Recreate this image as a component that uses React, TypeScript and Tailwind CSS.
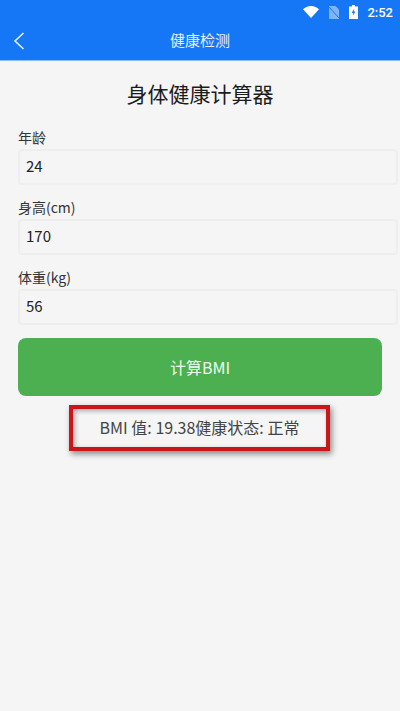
import React from "react";

const fields = [
  { label: "年龄", value: "24" },
  { label: "身高(cm)", value: "170" },
  { label: "体重(kg)", value: "56" },
];

const font = "font-['Noto_Sans_CJK_SC','Noto_Sans',sans-serif]";

const StatusBar = () => (
  <div className="flex h-[24px] items-center justify-end gap-[9px] pr-[7px] text-white">
    <svg width="16" height="12" viewBox="0 0 16 12">
      <path d="M0 3.2C2 1.3 4.8 0 8 0s6 1.3 8 3.2L8 12z" fill="#fff" />
    </svg>
    <svg width="10" height="13" viewBox="0 0 10 13" className="mx-[1px]">
      <path d="M0 0h6.5L10 3.5V13H0z" fill="#fff" fillOpacity="0.45" />
      <path d="M0 1l10 11" stroke="#1677ff" strokeWidth="1" />
    </svg>
    <svg width="9" height="14" viewBox="0 0 9 14">
      <path d="M3 0h3v1.5h3V14H0V1.5h3z" fill="#fff" />
      <path d="M5.2 3.6L2.6 8h1.7l-.5 3 2.6-4.4H4.7z" fill="#1677ff" />
    </svg>
    <span className="text-[13px] leading-none font-['Roboto',sans-serif] font-medium">2:52</span>
  </div>
);

const App = () => {
  return (
    <div className={`flex h-[711px] w-[400px] flex-col overflow-hidden bg-[#f5f5f5] ${font}`}>
      <header className="h-[61px] shrink-0 border-b border-[#8fbdfb] bg-[#1677f6]">
        <StatusBar />
        <div className="relative flex h-[33px] items-center justify-center">
          <svg width="12" height="18" viewBox="0 0 12 18" className="absolute left-[13px] top-[8px]">
            <path d="M10.5 1L2 9l8.5 8" fill="none" stroke="#e6f0ff" strokeWidth="1.6" />
          </svg>
          <span className="text-[15px] text-[#e6f0ff]">健康检测</span>
        </div>
      </header>

      <main className="flex flex-col px-[18px]">
        <h1 className="mt-[14px] h-[36px] text-center text-[21px] leading-[36px] font-normal text-[#1c1c1c]">
          身体健康计算器
        </h1>

        <div className="mt-[16px] flex flex-col gap-[12px]">
          {fields.map((field) => (
            <div key={field.label} className="flex flex-col">
              <label className="h-[22px] text-[14px] leading-[20px] text-[#333]">{field.label}</label>
              <div className="flex h-[36px] w-[380px] items-center rounded-[4px] border-2 border-[#eeeeee] bg-[#f5f5f5] pb-[2px] pl-[6px] text-[15px] text-[#222]">
                {field.value}
              </div>
            </div>
          ))}
        </div>

        <button className="mt-[13px] h-[58px] w-[364px] rounded-[8px] bg-[#4caf50] text-[16px] text-[#f0fff0]">
          计算BMI
        </button>

        <div className="mt-[9px] ml-[51px] flex h-[46px] w-[261px] items-center justify-center border-[4px] border-[#cc1518] pb-[2px] text-[16px] text-[#444] shadow-[2px_3px_6px_rgba(0,0,0,0.45),inset_2px_2px_5px_rgba(0,0,0,0.3)]">
          BMI 值: 19.38健康状态: 正常
        </div>
      </main>
    </div>
  );
};

export default App;
